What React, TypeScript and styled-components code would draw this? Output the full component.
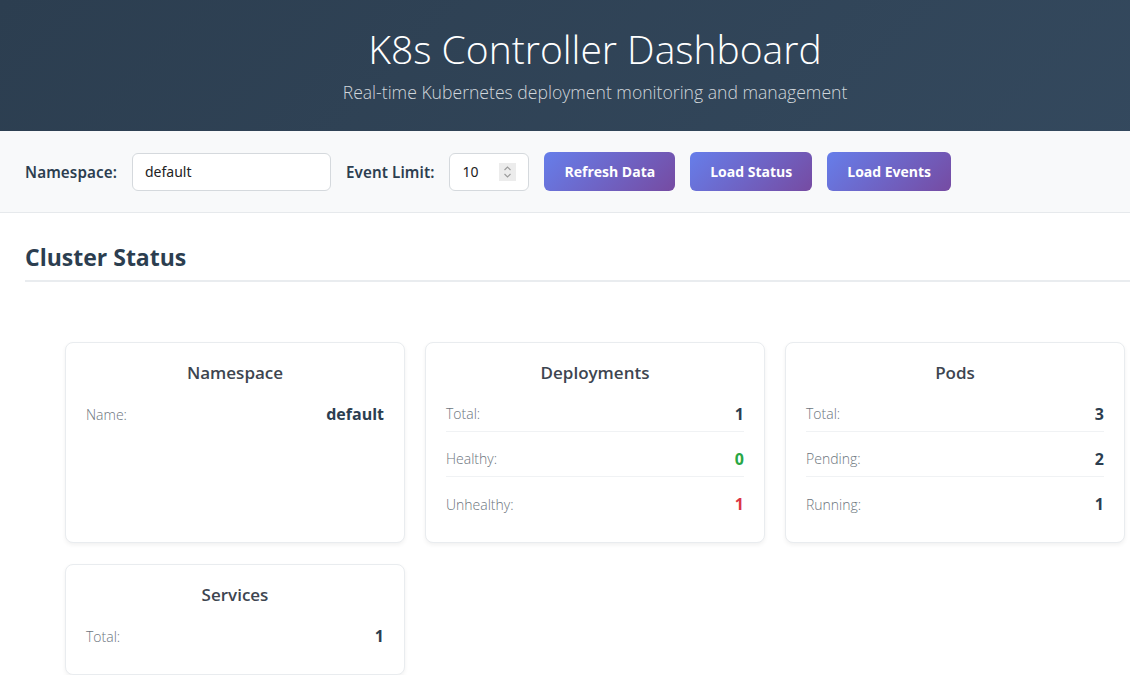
import React, { useState } from 'react';
import styled, { createGlobalStyle } from 'styled-components';

const GlobalStyle = createGlobalStyle`
  body {
    margin: 0;
    font-family: "Open Sans", "Noto Sans", sans-serif;
    background: #ffffff;
    color: #2c3e50;
    overflow-x: hidden;
  }
  * { box-sizing: border-box; }
`;

const Page = styled.div`
  min-width: 1190px;
`;

const Header = styled.header`
  height: 131px;
  background: linear-gradient(135deg, #2c3e50 0%, #34495e 100%);
  color: #fff;
  display: flex;
  flex-direction: column;
  align-items: center;
  padding-top: 23px;
`;

const Title = styled.h1`
  margin: 0;
  font-family: "Open Sans", sans-serif;
  font-weight: 300;
  font-size: 39px;
  line-height: 52px;
`;

const Subtitle = styled.p`
  margin: 5px 0 0;
  font-family: "Open Sans", sans-serif;
  font-weight: 300;
  font-size: 17.6px;
  color: #d0d6db;
`;

const Controls = styled.div`
  height: 82px;
  background: #f8f9fa;
  border-bottom: 1px solid #e6e9ec;
  display: flex;
  align-items: center;
  padding: 0 25px;
  gap: 15px;
`;

const Label = styled.label`
  font-family: "Noto Sans", sans-serif;
  font-weight: 600;
  font-size: 15.2px;
  letter-spacing: 0.1px;
  color: #2c3e50;
`;

const Input = styled.input<{ $width: number }>`
  width: ${(p) => p.$width}px;
  height: 38px;
  padding: 0 12px;
  border: 1px solid #d5d9dd;
  border-radius: 6px;
  background: #fff;
  font-family: "Noto Sans", sans-serif;
  font-size: 14px;
  color: #222;
  outline: none;
  -moz-appearance: textfield;
  &::-webkit-inner-spin-button,
  &::-webkit-outer-spin-button {
    -webkit-appearance: none;
    margin: 0;
  }
`;

const NumberWrap = styled.div`
  position: relative;
  display: flex;
`;

const Spinner = styled.div`
  position: absolute;
  right: 13px;
  top: 10px;
  width: 17px;
  height: 18px;
  background: #ececec;
  display: flex;
  flex-direction: column;
  align-items: center;
  justify-content: center;
  pointer-events: none;
`;

const Button = styled.button`
  height: 39px;
  padding: 0 20px;
  border: none;
  border-radius: 6px;
  background: linear-gradient(135deg, #667eea 0%, #764ba2 100%);
  color: #fff;
  font-family: "Open Sans", sans-serif;
  font-weight: 700;
  font-size: 14px;
  cursor: pointer;
`;

const Section = styled.section`
  padding: 28px 0 0 25px;
`;

const SectionTitle = styled.h2`
  margin: 0;
  padding-bottom: 7px;
  border-bottom: 2px solid #e9ecef;
  font-family: "Open Sans", sans-serif;
  font-weight: 700;
  font-size: 23px;
  color: #2c3e50;
`;

const Grid = styled.div`
  display: grid;
  grid-template-columns: repeat(3, 340px);
  gap: 21px 20px;
  padding: 60px 0 0 40px;
`;

const Card = styled.div<{ $height: number }>`
  height: ${(p) => p.$height}px;
  background: #fff;
  border: 1px solid #e9ecef;
  border-radius: 8px;
  box-shadow: 0 2px 4px rgba(0, 0, 0, 0.06);
  padding: 19px 20px;
`;

const CardTitle = styled.h3`
  margin: 0 0 3px;
  text-align: center;
  font-family: "Open Sans", sans-serif;
  font-weight: 600;
  font-size: 17px;
  line-height: 22px;
  color: #3d4550;
`;

const Row = styled.div`
  display: flex;
  justify-content: space-between;
  align-items: center;
  height: 45px;
  padding-top: 9px;
  border-bottom: 1px solid #f0f2f4;
  &:last-child { border-bottom: none; }
`;

const RowLabel = styled.span`
  font-family: "Open Sans", sans-serif;
  font-weight: 300;
  font-size: 14px;
  color: #6c757d;
`;

const RowValue = styled.span<{ $tone?: 'ok' | 'bad' }>`
  font-family: "Open Sans", sans-serif;
  font-weight: 700;
  font-size: 16px;
  color: ${(p) => (p.$tone === 'ok' ? '#28a745' : p.$tone === 'bad' ? '#dc3545' : '#2c3e50')};
`;

type Stat = { label: string; value: string; tone?: 'ok' | 'bad' };

const cards: { title: string; height: number; rows: Stat[] }[] = [
  { title: 'Namespace', height: 201, rows: [{ label: 'Name:', value: 'default' }] },
  {
    title: 'Deployments',
    height: 201,
    rows: [
      { label: 'Total:', value: '1' },
      { label: 'Healthy:', value: '0', tone: 'ok' },
      { label: 'Unhealthy:', value: '1', tone: 'bad' },
    ],
  },
  {
    title: 'Pods',
    height: 201,
    rows: [
      { label: 'Total:', value: '3' },
      { label: 'Pending:', value: '2' },
      { label: 'Running:', value: '1' },
    ],
  },
  { title: 'Services', height: 111, rows: [{ label: 'Total:', value: '1' }] },
];

const App: React.FC = () => {
  const [namespace, setNamespace] = useState('default');
  const [limit, setLimit] = useState('10');

  return (
    <Page>
      <GlobalStyle />
      <Header>
        <Title>K8s Controller Dashboard</Title>
        <Subtitle>Real-time Kubernetes deployment monitoring and management</Subtitle>
      </Header>
      <Controls>
        <Label>Namespace:</Label>
        <Input $width={199} value={namespace} onChange={(e) => setNamespace(e.target.value)} />
        <Label>Event Limit:</Label>
        <NumberWrap>
          <Input $width={80} type="number" value={limit} onChange={(e) => setLimit(e.target.value)} />
          <Spinner>
            <svg width="9" height="14" viewBox="0 0 9 14" fill="none" stroke="#9a9a9a" strokeWidth="1.1">
              <path d="M1.5 5 L4.5 2 L7.5 5" />
              <path d="M1.5 9 L4.5 12 L7.5 9" />
            </svg>
          </Spinner>
        </NumberWrap>
        <Button>Refresh Data</Button>
        <Button>Load Status</Button>
        <Button>Load Events</Button>
      </Controls>
      <Section>
        <SectionTitle>Cluster Status</SectionTitle>
        <Grid>
          {cards.map((c) => (
            <Card key={c.title} $height={c.height}>
              <CardTitle>{c.title}</CardTitle>
              {c.rows.map((r) => (
                <Row key={r.label}>
                  <RowLabel>{r.label}</RowLabel>
                  <RowValue $tone={r.tone}>{r.value}</RowValue>
                </Row>
              ))}
            </Card>
          ))}
        </Grid>
      </Section>
    </Page>
  );
};

export default App;
